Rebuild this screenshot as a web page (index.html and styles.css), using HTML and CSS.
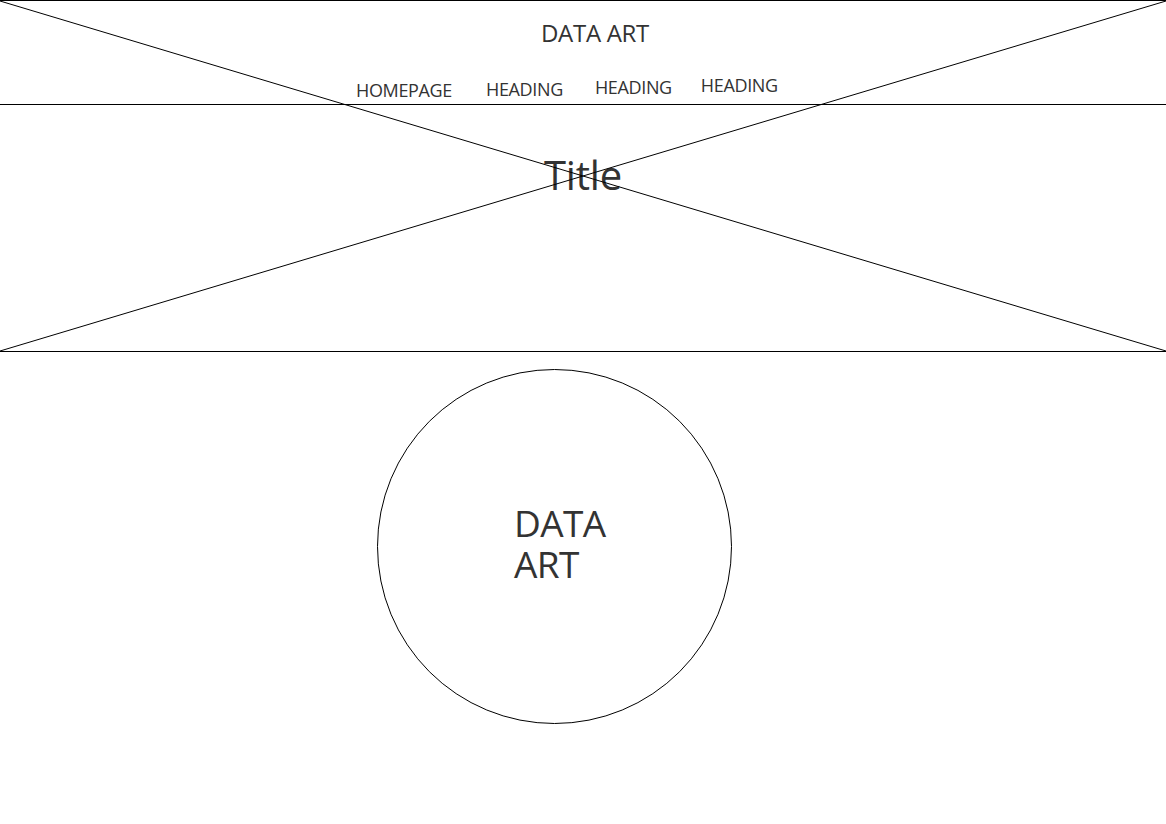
FILE: index.html
```html
<!DOCTYPE html>
<html>
<head>
<meta charset="utf-8">
<link rel="stylesheet" href="styles.css">
</head>
<body>
<div class="hero">
  <header class="header">
    <div class="brand">DATA ART</div>
    <nav class="nav">
      <span class="nav-item n1">HOMEPAGE</span>
      <span class="nav-item n2">HEADING</span>
      <span class="nav-item n3">HEADING</span>
      <span class="nav-item n4">HEADING</span>
    </nav>
  </header>
  <section class="banner">
    <h1 class="title">Title</h1>
  </section>
  <svg class="cross" width="100%" height="100%" preserveAspectRatio="none">
    <line x1="0" y1="0" x2="100%" y2="100%" stroke="#000" stroke-width="1"/>
    <line x1="100%" y1="0" x2="0" y2="100%" stroke="#000" stroke-width="1"/>
  </svg>
</div>
<main class="content">
  <div class="circle">
    <div class="circle-text">
      <div class="circle-line">DATA</div>
      <div class="circle-line">ART</div>
    </div>
  </div>
</main>
</body>
</html>
```

FILE: styles.css
```css
html, body {
  margin: 0;
  padding: 0;
  background: #fff;
  color: #333;
  font-family: "Open Sans", "Liberation Sans", sans-serif;
}

.hero {
  position: relative;
  height: 352px;
  border-top: 1px solid #000;
  border-bottom: 1px solid #000;
  box-sizing: border-box;
}

.header {
  height: 104px;
  border-bottom: 1px solid #000;
  box-sizing: border-box;
}

.brand {
  padding-top: 17px;
  padding-left: 24px;
  text-align: center;
  font-size: 24px;
  line-height: 30px;
  letter-spacing: -0.3px;
}

.nav {
  display: flex;
  align-items: flex-start;
  padding-left: 356px;
  margin-top: 26px;
  font-size: 18px;
  line-height: 22px;
  letter-spacing: -0.35px;
}

.nav-item { display: block; }
.n1 { padding-top: 5px; margin-right: 34px; }
.n2 { padding-top: 4px; margin-right: 32px; }
.n3 { padding-top: 2px; margin-right: 29px; }
.n4 { padding-top: 0; }

.banner {
  display: flex;
  justify-content: center;
}

.title {
  margin: 0;
  padding-top: 47px;
  font-weight: 400;
  font-size: 40px;
  line-height: 46px;
  letter-spacing: -0.2px;
}

.cross {
  position: absolute;
  left: 0;
  top: 0;
  width: 100%;
  height: 100%;
  pointer-events: none;
}

.content {
  padding-top: 17px;
  padding-left: 377px;
}

.circle {
  width: 355px;
  height: 355px;
  border: 1px solid #000;
  border-radius: 50%;
  box-sizing: border-box;
  display: flex;
  align-items: center;
  justify-content: flex-start;
}

.circle-text {
  margin-left: 136px;
  margin-top: -8px;
  font-size: 37px;
  line-height: 41px;
  letter-spacing: -0.6px;
}

.circle-line { display: block; }
```
